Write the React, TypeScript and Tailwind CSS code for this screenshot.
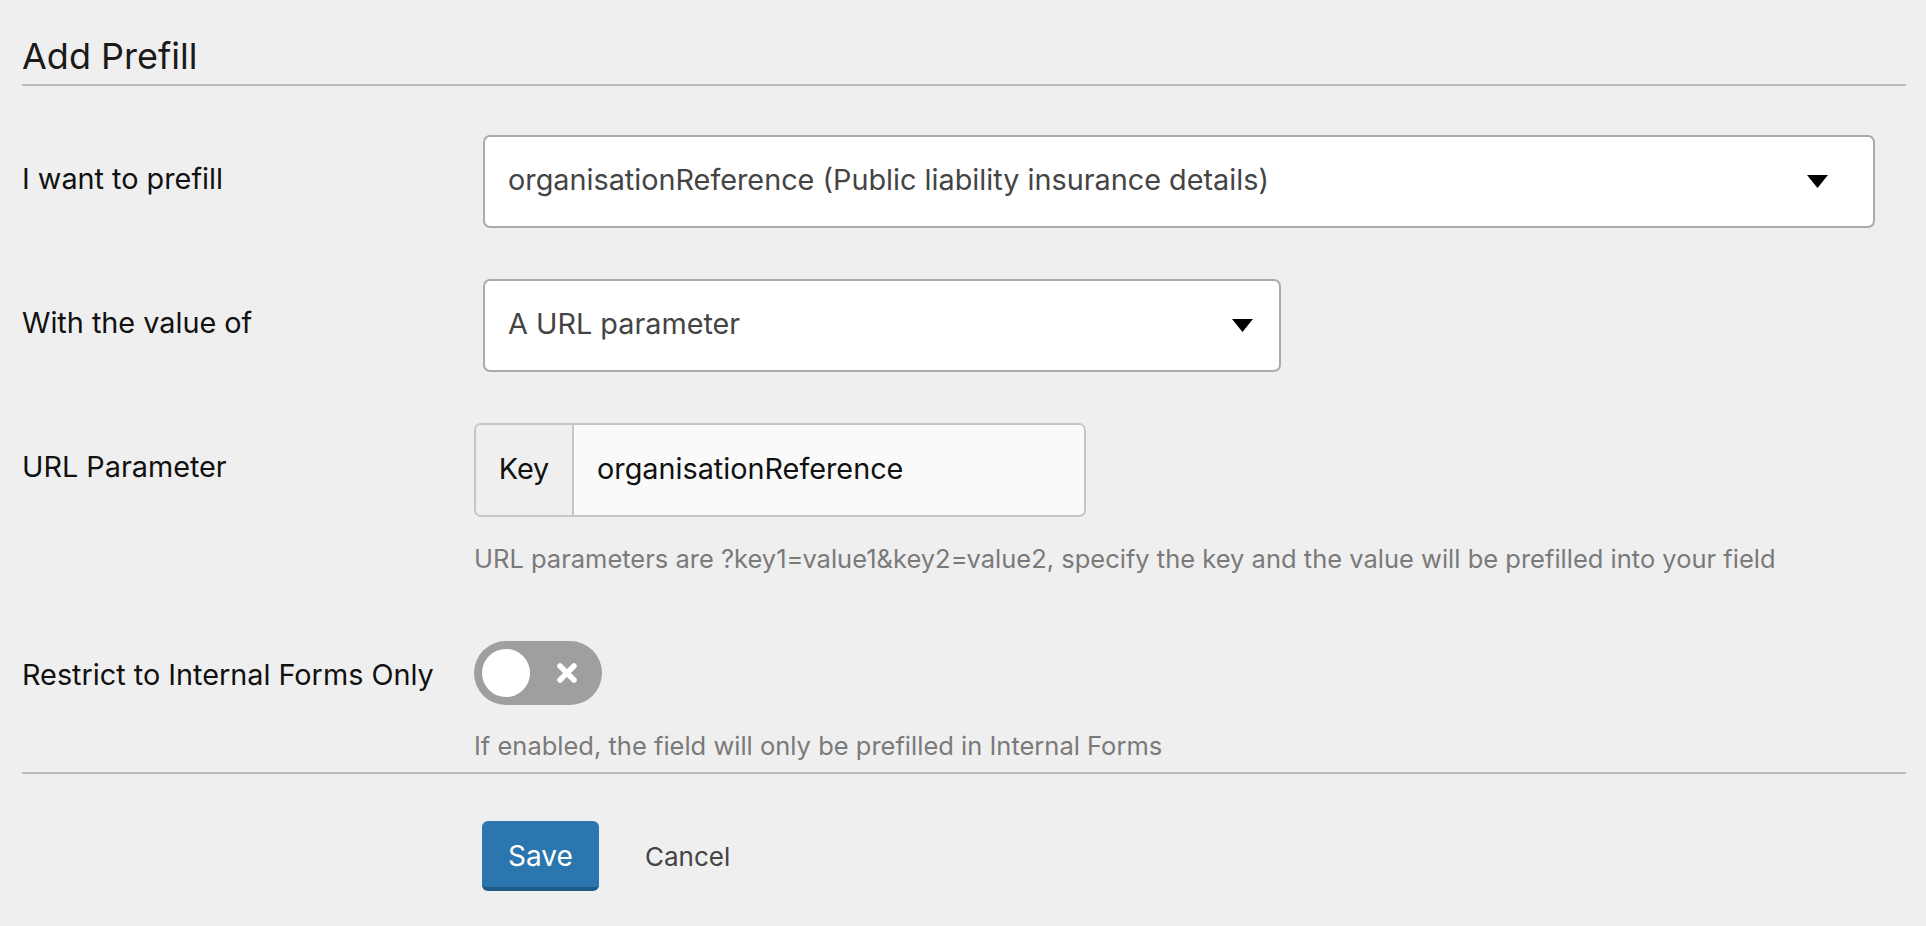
function Caret() {
    return (
        <svg width="21" height="13" viewBox="0 0 21 13" className="shrink-0">
            <path d="M0 0 H21 L10.5 13 Z" fill="#000" />
        </svg>
    )
}

function SelectBox({ value, width, caretPad }: { value: string; width: string; caretPad: string }) {
    return (
        <div
            className={`ml-[9px] flex h-[93px] items-center justify-between rounded-[7px] border-2 border-[#aaaaaa] bg-white pl-[23px] text-[28.8px] text-[#444] ${width}`}
        >
            <span className="pb-[4px]">{value}</span>
            <span className={caretPad}>
                <Caret />
            </span>
        </div>
    )
}

function Label({ children, className = 'pb-[6px]' }: { children: React.ReactNode; className?: string }) {
    return <div className={`w-[452px] shrink-0 text-[28.8px] text-[#111] ${className}`}>{children}</div>
}

export default function App() {
    return (
        <div className="min-h-screen bg-[#efefef] pl-[22px] pr-[20px] font-['Inter',sans-serif]">
            <h2 className="border-b-2 border-[#bbbbbb] pt-[34px] pb-[6px] text-[36px] leading-[44px] text-[#1a1a1a]">
                Add Prefill
            </h2>

            {/* I want to prefill */}
            <div className="mt-[49px] flex items-center">
                <Label>I want to prefill</Label>
                <SelectBox
                    value="organisationReference (Public liability insurance details)"
                    width="w-[1392px]"
                    caretPad="pr-[45px]"
                />
            </div>

            {/* With the value of */}
            <div className="mt-[51px] flex items-center">
                <Label>With the value of</Label>
                <SelectBox value="A URL parameter" width="w-[798px]" caretPad="pr-[26px]" />
            </div>

            {/* URL Parameter */}
            <div className="mt-[51px] flex items-center">
                <Label>URL Parameter</Label>
                <div className="flex h-[94px] w-[612px] overflow-hidden rounded-[7px] border-2 border-[#c6c6c6] text-[28.8px] text-[#111]">
                    <div className="flex w-[98px] items-center justify-center border-r-2 border-[#c6c6c6] bg-[#efefef] pb-[2px]">
                        Key
                    </div>
                    <div className="flex flex-1 items-center bg-[#fafafa] pl-[23px] pb-[2px]">organisationReference</div>
                </div>
            </div>
            <p className="mt-[24px] ml-[452px] text-[25.5px] leading-[36px] text-[#7a7a7a]">
                URL parameters are ?key1=value1&amp;key2=value2, specify the key and the value will be prefilled into your field
            </p>

            {/* Restrict */}
            <div className="mt-[64px] flex items-center">
                <Label className="pt-[4px]">Restrict to Internal Forms Only</Label>
                <button className="flex h-[64px] w-[128px] items-center rounded-full bg-[#9f9f9f] px-[8px]">
                    <span className="h-[48px] w-[48px] rounded-full bg-white" />
                    <svg width="22" height="22" viewBox="0 0 22 22" className="ml-[26px]">
                        <path d="M4 4 L18 18 M18 4 L4 18" stroke="#fff" strokeWidth="5.5" strokeLinecap="round" />
                    </svg>
                </button>
            </div>
            <p className="mt-[23px] ml-[452px] text-[25.5px] leading-[36px] text-[#7a7a7a]">
                If enabled, the field will only be prefilled in Internal Forms
            </p>

            <div className="mt-[8px] border-t-2 border-[#bbbbbb]" />

            <div className="mt-[47px] ml-[460px] flex items-center gap-[46px]">
                <button className="h-[70px] w-[117px] rounded-[6px] border-b-4 border-[#1f5a87] bg-[#2b76ae] pt-[3px] text-[28px] text-white">
                    Save
                </button>
                <span className="text-[26px] text-[#444]">Cancel</span>
            </div>
        </div>
    )
}
